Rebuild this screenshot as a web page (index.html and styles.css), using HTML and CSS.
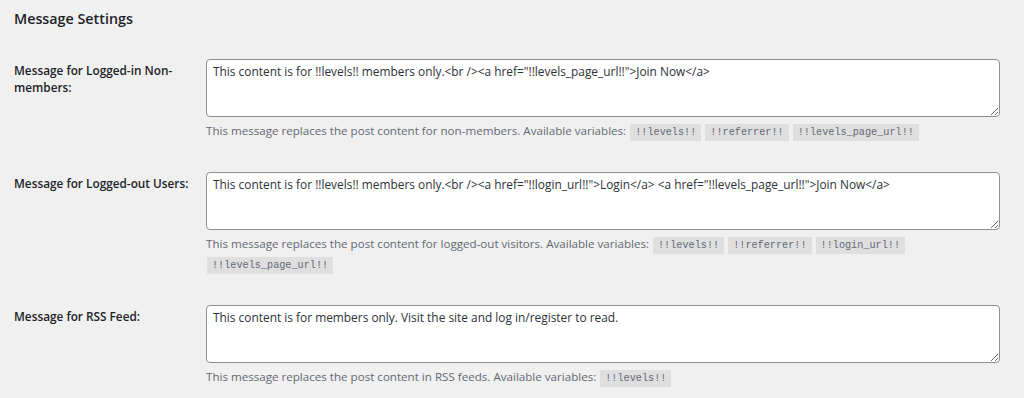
FILE: index.html
```html
<!DOCTYPE html>
<html lang="en">
<head>
    <meta charset="UTF-8">
    <title>Message Settings</title>
    <link rel="stylesheet" href="styles.css">
</head>
<body>
    <div class="wrap">
        <h2 class="section-title">Message Settings</h2>

        <div class="form-row">
            <label class="row-label" for="nonmembers">Message for Logged-in Non-members:</label>
            <div class="row-field">
                <textarea id="nonmembers" class="large-text">This content is for !!levels!! members only.&lt;br /&gt;&lt;a href="!!levels_page_url!!"&gt;Join Now&lt;/a&gt;</textarea>
                <p class="description">This message replaces the post content for non-members. Available variables: <code>!!levels!!</code> <code>!!referrer!!</code> <code>!!levels_page_url!!</code></p>
            </div>
        </div>

        <div class="form-row">
            <label class="row-label" for="loggedout">Message for Logged-out Users:</label>
            <div class="row-field">
                <textarea id="loggedout" class="large-text">This content is for !!levels!! members only.&lt;br /&gt;&lt;a href="!!login_url!!"&gt;Login&lt;/a&gt; &lt;a href="!!levels_page_url!!"&gt;Join Now&lt;/a&gt;</textarea>
                <p class="description">This message replaces the post content for logged-out visitors. Available variables: <code>!!levels!!</code> <code>!!referrer!!</code> <code>!!login_url!!</code> <code>!!levels_page_url!!</code></p>
            </div>
        </div>

        <div class="form-row">
            <label class="row-label" for="rssfeed">Message for RSS Feed:</label>
            <div class="row-field">
                <textarea id="rssfeed" class="large-text">This content is for members only. Visit the site and log in/register to read.</textarea>
                <p class="description">This message replaces the post content in RSS feeds. Available variables: <code>!!levels!!</code></p>
            </div>
        </div>
    </div>
</body>
</html>
```

FILE: styles.css
```css
* {
    margin: 0;
    padding: 0;
    box-sizing: border-box;
}

body {
    background-color: #f0f0f1;
    color: #1d2327;
    font-family: 'Open Sans', sans-serif;
    font-size: 12px;
}

.wrap {
    padding: 0 24px 0 14px;
}

.section-title {
    font-size: 14.3px;
    font-weight: 600;
    line-height: 20px;
    padding-top: 9px;
    margin-bottom: 15px;
}

.form-row {
    display: flex;
    padding: 15px 0 16px;
}

.row-label {
    width: 192px;
    flex-shrink: 0;
    padding: 3px 10px 0 0;
    font-size: 11.8px;
    font-weight: 600;
    line-height: 17px;
}

.row-field {
    flex: 1;
}

.large-text {
    display: block;
    width: 100%;
    height: 58px;
    padding: 2px 6px;
    border: 1px solid #8c8f94;
    border-radius: 4px;
    background-color: #fff;
    color: #2c3338;
    font-family: 'Open Sans', sans-serif;
    font-size: 11.9px;
    line-height: 19px;
    resize: vertical;
}

.description {
    margin-top: 4px;
    color: #646970;
    font-size: 11.6px;
    line-height: 20px;
}

.description code {
    display: inline-block;
    padding: 0 5px;
    margin-left: 1px;
    background-color: rgba(0, 0, 0, 0.07);
    font-family: 'Liberation Mono', monospace;
    font-size: 10.2px;
    line-height: 17px;
}
```
